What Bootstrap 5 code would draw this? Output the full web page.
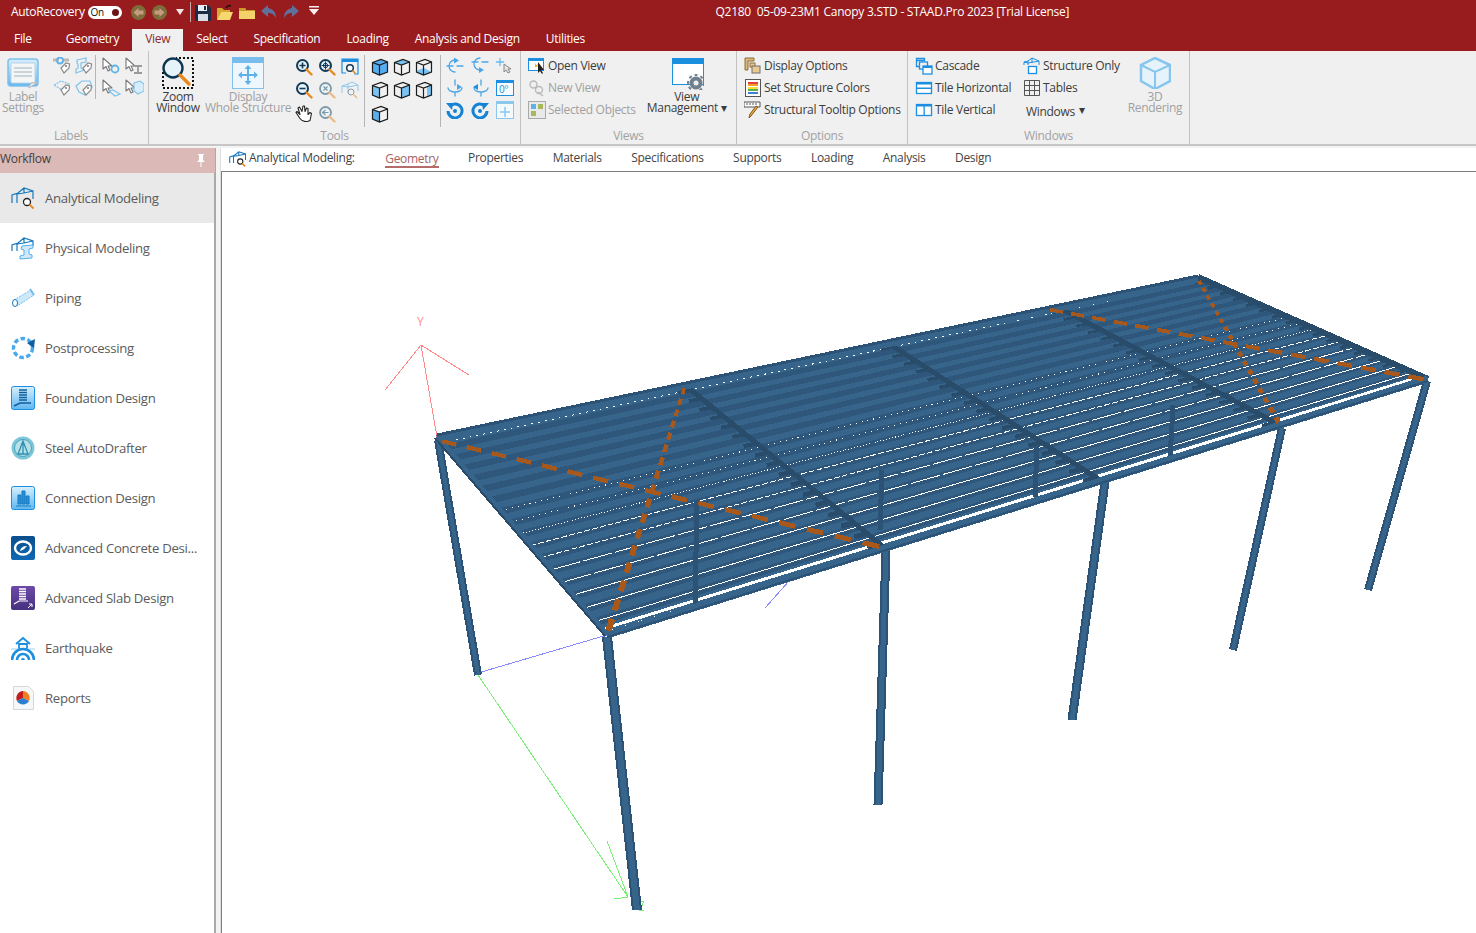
<!DOCTYPE html>
<html lang="en">
<head>
<meta charset="utf-8">
<title>STAAD.Pro 2023</title>
<link href="https://cdn.jsdelivr.net/npm/bootstrap@5.3.0/dist/css/bootstrap.min.css" rel="stylesheet">
<style>
html,body{height:100%;overflow:hidden}
body{font-family:"Open Sans","Noto Sans","Liberation Sans",sans-serif;font-size:12px;background:#f3f3f3;color:#444;letter-spacing:-.3px}
svg{display:block;flex:none}
.defs{width:0;height:0}
.titlebar{height:26px;background:#981c1e;color:#fff;padding:0 0 2px 11px;font-size:12px}
.toggle{width:34px;height:13px;background:#fff;border-radius:7px;margin-left:3px;color:#111;font-size:10px;line-height:13px;padding-left:3px;position:relative}
.toggle::after{content:"";position:absolute;right:3px;top:3px;width:7px;height:7px;border-radius:50%;background:#6a1416}
.tb-sep{width:1px;height:20px;background:#cfa9a9;margin:0 4px 0 6px}
.tb-ic{margin-left:6px}
.tb-last{margin-left:10px}
.wtitle{padding-right:10px;white-space:pre;letter-spacing:-.26px}
.tabs{height:25px;background:#981c1e;margin:0;padding-top:3px;border:0;flex-wrap:nowrap}
.tabs .nav-link{height:22px;padding:2px 13px 0;color:#fff;border:0;border-radius:0;background:none;font-size:12px;line-height:16px;margin:0}
.tabs .nav-link.active{background:#f0f0f0;color:#8c2a2a}
.tabs .file{padding-left:14px;padding-right:21px}
.ribbon{height:95px;background:#f0f0f0;border-bottom:2px solid #c6c6c6;flex:none}
.rgroup{height:93px;border-right:1px solid #c2c2c2;flex:none}
.w1{width:149px}.w2{width:372px}.w3{width:216px}.w4{width:171px}.w5{width:282px}
.rbody{height:77px;padding-top:4px}
.rtitle{height:16px;line-height:16px;text-align:center;color:#a2a2a2}
.w1 .rtitle{padding-right:6px}
.lbtn{line-height:11px;text-align:center;white-space:nowrap;padding-top:2px}
.lbtn svg{margin-bottom:2px}
.muted{color:#a0a0a0}
.dk{color:#3c3c3c}
.ico-grid{display:grid;align-content:start}
.g22{grid-template-columns:repeat(2,22px);grid-auto-rows:22px}
.g23{grid-template-columns:repeat(2,23px);grid-auto-rows:22px}
.t23{grid-template-columns:repeat(3,23px);grid-auto-rows:23.5px}
.t22{grid-template-columns:repeat(3,22px);grid-auto-rows:23.5px}
.t25{grid-template-columns:repeat(3,25px);grid-auto-rows:22px}
.ico-grid>*{align-self:center;justify-self:center}
.vsep{width:1px;background:#b5b5b5;flex:none}
.vs1{height:44px;margin:0 3px 0 0}
.vs2{height:72px;margin:0 4px 0 3px}
.vs3{height:72px;margin:0 1px 0 5px}
.srow{height:22px;gap:2px;white-space:nowrap}
.g1{padding-left:51px}
.lb-label{width:46px;margin-left:-51px;margin-right:5px}
.lb-zoom{width:58px}
.lb-disp{width:86px;margin-left:-2px;margin-right:1px}
.pl7{padding-left:7px}
.lb-view{width:90px;margin-left:6px;padding-top:3px}
.lb-view svg{margin-bottom:1px}
.lb-view svg.mx-auto{position:relative;left:1px}
.col-a{width:108px;margin-left:7px}
.col-b{width:98px}
.win-drop{padding-left:3px;height:22px;margin-top:2px}
.work{min-height:0;padding-top:2px}
.side{width:216px;background:#fff;border-right:2px solid #a9a9a9;flex:none}
.side-h{height:25px;background:#dbb9b6;color:#3f3f3f;padding:0 8px 4px 0;font-size:12px;margin-right:-1px}
.side-h svg{margin-top:3px;margin-right:1px}
.side .list-group-item{height:50px;border:0;border-radius:0;padding:2px 0 0 11px;gap:10px;color:#5b5b5b;font-size:13.2px;background:#fff;white-space:nowrap}
.side .list-group-item.active{background:#e9e9e9;color:#5b5b5b}
.side .list-group-item svg{margin-top:-2px}
.gutter{width:4px;flex:none}
.main{min-width:0;background:#fff;border-left:1px solid #dedede}
.subnav{height:23px;background:#fff;gap:29.5px;padding:0 0 3px 8px;color:#444;white-space:nowrap}
.subnav .sn-title{gap:2px;margin-right:1px}
.subnav .on{color:#a86262;border-bottom:2px solid #b56c6c;line-height:15px;margin-top:2px}
.canvas{border-top:1px solid #808080;border-left:1px solid #808080;background:#fff;min-height:0;overflow:hidden}
.s{fill:none;stroke-width:1.300;stroke-linecap:round;stroke-linejoin:round}
.yl{font-size:12px;fill:#ff9090;font-family:"Open Sans",sans-serif}
</style>
</head>
<body>
<svg class="defs" aria-hidden="true">
<defs>
<linearGradient id="gb" x1="0" y1="0" x2="0" y2="1"><stop offset="0" stop-color="#d8effd"/><stop offset="1" stop-color="#5fb6f0"/></linearGradient>
<linearGradient id="gp" x1="0" y1="0" x2="0" y2="1"><stop offset="0" stop-color="#6d4aa8"/><stop offset="1" stop-color="#47307f"/></linearGradient>
<linearGradient id="gc" x1="0" y1="0" x2="0" y2="1"><stop offset="0" stop-color="#0a4e8c"/><stop offset="1" stop-color="#0f68b4"/></linearGradient>
<symbol id="tag" viewBox="0 0 18 18"><path d="M8 11l5-5 3.500 1-.5 4-5 5z" fill="#fff" stroke="#8b8b8b" stroke-width="1.200"/><circle cx="13" cy="9" r="1" fill="#777"/></symbol>
<symbol id="cur" viewBox="0 0 18 18"><path d="M2 1v11l3-2.500 2 4.500 2-1-2-4h4z" fill="#fff" stroke="#777" stroke-width="1.100" stroke-linejoin="round"/></symbol>
<symbol id="cube" viewBox="0 0 18 18"><path d="M1.500 4.500 10 1.500l6.500 2.500v10L8.500 17l-7-3zM1.500 4.500 8.500 7l8-3M8.500 7v10" fill="none" stroke="#1c1c1c" stroke-width="1.200"/></symbol>
<symbol id="mag" viewBox="0 0 18 18"><circle cx="7.500" cy="7.500" r="5.500" fill="#e9f3fa" stroke="#123a57" stroke-width="2"/><path d="M11.500 11.500l5 5" stroke="#e88a1e" stroke-width="2.400" stroke-linecap="round"/></symbol>
<symbol id="magg" viewBox="0 0 18 18"><circle cx="7.500" cy="7.500" r="5.500" fill="#eef3f6" stroke="#7d9aa8" stroke-width="1.800"/><path d="M11.500 11.500l5 5" stroke="#edbb8a" stroke-width="2.400" stroke-linecap="round"/></symbol>
</defs>
</svg>

<div class="d-flex flex-column vh-100">
  <!-- title bar -->
  <div class="titlebar d-flex align-items-center flex-none">
    <span>AutoRecovery</span>
    <span class="toggle">On</span>
    <svg class="ms-2" width="17" height="17" viewBox="0 0 17 17"><circle cx="8.500" cy="8.500" r="7.500" fill="#7e6c3a"/><path d="M3.500 8.500 8.500 4v2.500h5v4h-5V13z" fill="#c79a82"/></svg>
    <svg class="ms-1" width="17" height="17" viewBox="0 0 17 17"><circle cx="8.500" cy="8.500" r="7.500" fill="#7e6c3a"/><path d="M13.500 8.500 8.500 4v2.500h-5v4h5V13z" fill="#c79a82"/></svg>
    <svg class="ms-2" width="8" height="6" viewBox="0 0 8 6"><path d="M0 0h8L4 6z" fill="#f4e6e6"/></svg>
    <span class="tb-sep"></span>
    <svg width="16" height="17" viewBox="0 0 16 17"><path d="M0 1h13l3 3v13H0z" fill="#1d2c44"/><path d="M3 1h9v6H3z" fill="#e8edf4"/><path d="M9 2h2v4H9z" fill="#1d2c44"/><path d="M3 10h10v7H3z" fill="#d7dde6"/></svg>
    <svg class="tb-ic" width="16" height="15" viewBox="0 0 16 15"><path d="M0 3h5l2 2h6v2H4L1 14H0z" fill="#d7a92c"/><path d="M4 7h12l-3 8H0z" fill="#f6d770"/><path d="M9 3c1-2 3-3 5-2" fill="none" stroke="#111" stroke-width="1.200"/></svg>
    <svg class="tb-ic" width="16" height="13" viewBox="0 0 16 13"><path d="M0 2h6l1 2h9v9H0z" fill="#f3d26c"/><path d="M0 2h6l1 2h9v1H0z" fill="#c99a28"/></svg>
    <svg class="tb-ic" width="16" height="14" viewBox="0 0 16 14"><path d="M7 0 0 6l7 6V8c3 0 6 1 8 5 0-6-3-9-8-10z" fill="#61709a"/></svg>
    <svg class="tb-ic" width="16" height="14" viewBox="0 0 16 14"><path d="M9 0l7 6-7 6V8c-3 0-6 1-8 5 0-6 3-9 8-10z" fill="#61709a"/></svg>
    <svg class="tb-last mb-1" width="10" height="9" viewBox="0 0 10 9"><path d="M0 0h10v1.500H0zM0 3h10L5 9z" fill="#fbeeee"/></svg>
    <div class="flex-grow-1 text-center wtitle">Q2180  05-09-23M1 Canopy 3.STD - STAAD.Pro 2023 [Trial License]</div>
  </div>

  <!-- ribbon tabs -->
  <ul class="nav nav-tabs tabs flex-none">
    <li class="nav-item"><a class="nav-link file" href="#">File</a></li>
    <li class="nav-item"><a class="nav-link" href="#">Geometry</a></li>
    <li class="nav-item"><a class="nav-link active" href="#">View</a></li>
    <li class="nav-item"><a class="nav-link" href="#">Select</a></li>
    <li class="nav-item"><a class="nav-link" href="#">Specification</a></li>
    <li class="nav-item"><a class="nav-link" href="#">Loading</a></li>
    <li class="nav-item"><a class="nav-link" href="#">Analysis and Design</a></li>
    <li class="nav-item"><a class="nav-link" href="#">Utilities</a></li>
  </ul>

  <!-- ribbon -->
  <div class="ribbon d-flex">
    <!-- Labels -->
    <div class="rgroup w1">
      <div class="rbody d-flex g1">
        <div class="lbtn lb-label muted">
          <svg class="mx-auto" width="32" height="32" viewBox="0 0 32 32"><rect x="1" y="2" width="30" height="27" rx="3" fill="url(#gb)" stroke="#7cc0ec" stroke-width="1.500"/><rect x="4" y="6" width="24" height="20" rx="1" fill="#f4f5f5" stroke="#b9d4e6"/><path d="M7 11h18M7 15h18M7 19h18" stroke="#9fb3c2"/><path d="M22 31c0-4 3-6 9-6z" fill="#e9e9e9" stroke="#b5b5b5"/></svg>
          Label<br>Settings
        </div>
        <div class="ico-grid g22">
          <svg width="18" height="18" viewBox="0 0 18 18"><path d="M0 3h6M10 3h6" stroke="#b9b9b9" stroke-width="3"/><circle cx="7" cy="3.500" r="3" fill="none" stroke="#5fb2e8" stroke-width="1.800"/><use href="#tag"/></svg>
          <svg width="18" height="18" viewBox="0 0 18 18"><path d="M2 3 11 1v4l-5 1v5l3 2-8 3v-4l2-1V7L2 6z" fill="none" stroke="#7fc2ee" stroke-width="1.200"/><use href="#tag"/></svg>
          <svg width="18" height="18" viewBox="0 0 18 18"><path d="M1 6 8 2l8 3-7 6z" fill="none" stroke="#7fc2ee" stroke-width="1.200" stroke-dasharray="2 1"/><use href="#tag"/></svg>
          <svg width="18" height="18" viewBox="0 0 18 18"><path d="M1 7 7 2h8l2 6-7 8-6-3z" fill="none" stroke="#7fc2ee" stroke-width="1.200"/><use href="#tag"/></svg>
        </div>
        <span class="vsep vs1"></span>
        <div class="ico-grid g23">
          <svg width="20" height="18" viewBox="0 0 20 18"><use href="#cur" width="18" height="18"/><circle cx="14" cy="12" r="3.500" fill="none" stroke="#5fb2e8" stroke-width="1.800"/></svg>
          <svg width="20" height="18" viewBox="0 0 20 18"><use href="#cur" width="18" height="18"/><path d="M10 9h8M10 16h8M14 9v7" stroke="#9a9a9a" stroke-width="1.800"/></svg>
          <svg width="20" height="18" viewBox="0 0 20 18"><use href="#cur" width="18" height="18"/><path d="M8 12l4-1 7 4-5 2z" fill="none" stroke="#7fc2ee" stroke-width="1.200"/></svg>
          <svg width="20" height="18" viewBox="0 0 20 18"><use href="#cur" width="18" height="18"/><path d="M10 4l6-2 4 3v7l-6 3-4-3z" fill="#d8edfb" stroke="#7fc2ee" stroke-width="1.100"/></svg>
        </div>
      </div>
      <div class="rtitle">Labels</div>
    </div>

    <!-- Tools -->
    <div class="rgroup w2">
      <div class="rbody d-flex">
        <div class="lbtn lb-zoom dk">
          <svg class="mx-auto" width="34" height="32" viewBox="0 0 34 32"><rect x="2" y="1" width="30" height="30" fill="none" stroke="#111" stroke-width="2" stroke-dasharray="2 2"/><path d="M0 0h15v15H0z" fill="#f0f0f0"/><circle cx="12" cy="11" r="9.500" fill="#e6f3fb" stroke="#0e3550" stroke-width="2.400"/><path d="M19 18l9 9" stroke="#e8881c" stroke-width="3.400" stroke-linecap="round"/></svg>
          Zoom<br>Window
        </div>
        <div class="lbtn lb-disp muted">
          <svg class="mx-auto" width="32" height="32" viewBox="0 0 32 32"><rect x=".5" y=".5" width="31" height="31" fill="#eef7fd" stroke="#82c3ee"/><rect x="0" y="0" width="32" height="6" fill="#79bdec"/><path d="M16 9v18M7 18h18" stroke="#5fb2e8" stroke-width="2"/><path d="M16 8l3.500 4h-7zM16 28l3.500-4h-7zM6 18l4-3.500v7zM26 18l-4-3.500v7z" fill="#5fb2e8"/></svg>
          Display<br>Whole Structure
        </div>
        <div class="ico-grid t23">
          <svg width="18" height="18" viewBox="0 0 18 18"><use href="#mag"/><path d="M4.500 7.500h6M7.500 4.500v6" stroke="#123a57" stroke-width="1.600"/></svg>
          <svg width="18" height="18" viewBox="0 0 18 18"><use href="#mag"/><path d="M3.500 7.500h8M7.500 3.500v8" stroke="#123a57" stroke-width="1"/><circle cx="7.500" cy="7.500" r="2.200" fill="none" stroke="#123a57"/></svg>
          <svg width="18" height="18" viewBox="0 0 18 18"><path d="M1 5V1h16v15h-4M1 5v10h4" fill="none" stroke="#1d8fe0" stroke-width="1.200"/><path d="M1 1h16v3H1z" fill="#1d8fe0"/><circle cx="9" cy="10" r="3.300" fill="#fff" stroke="#123a57" stroke-width="1.500"/><path d="M11.500 12.500l3 3" stroke="#e8881c" stroke-width="1.600"/></svg>
          <svg width="18" height="18" viewBox="0 0 18 18"><use href="#mag"/><path d="M4.500 7.500h6" stroke="#123a57" stroke-width="1.600"/></svg>
          <svg width="18" height="18" viewBox="0 0 18 18"><use href="#magg"/><path d="M5.500 5.500l4 4M9.500 5.500l-4 4" stroke="#7d9aa8" stroke-width="1.200"/></svg>
          <svg width="18" height="18" viewBox="0 0 18 18"><path d="M1 12V5l6-2 4-2 6 3v6M7 3v9M1 5l6 1 10-2" fill="none" stroke="#8fc8ee"/><circle cx="10" cy="11" r="3" fill="#f0f0f0" stroke="#8b9da8"/><path d="M12 13l4 4" stroke="#edbb8a" stroke-width="1.600"/></svg>
          <svg width="18" height="19" viewBox="0 0 18 18"><path d="M5 10 2 7 1 8l4 6c2 3 7 4 10 2l1.500-7-1.500-1-2 2V4l-1.500-.5L10 7 9.500 1.500H8L7 7 4.500 2.500 3 3.500z" fill="#fff" stroke="#222" stroke-width="1.100" stroke-linejoin="round"/></svg>
          <svg width="18" height="18" viewBox="0 0 18 18"><use href="#magg"/><path d="M4.500 7.500h6M7.500 5l-3 2.500 3 2.500" fill="none" stroke="#7d9aa8" stroke-width="1.200"/></svg>
        </div>
        <span class="vsep vs2"></span>
        <div class="ico-grid t22">
          <svg width="18" height="18" viewBox="0 0 18 18"><path d="M1.500 4.500 10 1.500l6.500 2.500v10L8.500 17l-7-3z" fill="#55aef0"/><use href="#cube"/></svg>
          <svg width="18" height="18" viewBox="0 0 18 18"><path d="M1.500 4.500 10 1.500l6.500 2.500-8 3z" fill="#79c3f4"/><use href="#cube"/></svg>
          <svg width="18" height="18" viewBox="0 0 18 18"><path d="M3 12l6-2 7.500 4-8 3-7-3z" fill="#79c3f4"/><use href="#cube"/></svg>
          <svg width="18" height="18" viewBox="0 0 18 18"><path d="M1.500 4.500 8.500 7v10l-7-3z" fill="#79c3f4"/><use href="#cube"/></svg>
          <svg width="18" height="18" viewBox="0 0 18 18"><path d="M8.500 7l8-3v10l-8 3z" fill="#79c3f4"/><use href="#cube"/></svg>
          <svg width="18" height="18" viewBox="0 0 18 18"><path d="M12 5.500l4.500-1.500v10l-4.500 1.700z" fill="#79c3f4"/><use href="#cube"/></svg>
          <svg width="18" height="18" viewBox="0 0 18 18"><path d="M1.500 4.500 8.500 7v10l-7-3z" fill="#5ab0ee"/><use href="#cube"/></svg>
        </div>
        <span class="vsep vs3"></span>
        <div class="ico-grid t25">
          <svg width="18" height="18" viewBox="0 0 18 18"><path class="s" d="M1 9h6M11 9h6M9 3a6 6 0 0 0 0 12" stroke="#4aa6e8"/><path d="M8 .5l5 3-5 3z" fill="#4aa6e8"/></svg>
          <svg width="18" height="18" viewBox="0 0 18 18"><path class="s" d="M1 5h6M11 5h6M9 1a6 6 0 0 0 0 12" stroke="#4aa6e8"/><path d="M8 10l5 3-5 3z" fill="#4aa6e8"/></svg>
          <svg width="20" height="18" viewBox="0 0 20 18"><path d="M5 1v8M1 5h8" stroke="#6ab8ee" stroke-width="1.300"/><path d="M9 7v8l2-2 2 3 2-1-2-3h3z" fill="#e3e3e3" stroke="#888"/></svg>
          <svg width="18" height="18" viewBox="0 0 18 18"><path class="s" d="M9 1v5M9 13v4M2 9a7 4 0 0 0 14 0" stroke="#4aa6e8"/><path d="M11 5l5 3-5 3z" fill="#4aa6e8"/></svg>
          <svg width="18" height="18" viewBox="0 0 18 18"><path class="s" d="M10 1v5M10 13v4M3 9a7 4 0 0 0 14 0" stroke="#4aa6e8"/><path d="M7 5 2 8l5 3z" fill="#1d8fe0"/></svg>
          <svg width="18" height="16" viewBox="0 0 18 16"><rect x=".5" y=".5" width="17" height="15" fill="#f8fbfd" stroke="#1d8fe0"/><path d="M0 0h18v3H0z" fill="#1d8fe0"/><text x="3" y="13" font-size="10" fill="#1d8fe0">0º</text></svg>
          <svg width="18" height="18" viewBox="0 0 18 18"><path d="M4 5a7 7 0 1 1-2 5" fill="none" stroke="#1483d6" stroke-width="3"/><path d="M0 2l7 0-1 7z" fill="#1483d6"/><circle cx="9" cy="10" r="2" fill="#1483d6"/></svg>
          <svg width="18" height="18" viewBox="0 0 18 18"><path d="M14 5a7 7 0 1 0 2 5" fill="none" stroke="#1483d6" stroke-width="3"/><path d="M18 2l-7 0 1 7z" fill="#1483d6"/><circle cx="9" cy="10" r="2" fill="#1483d6"/></svg>
          <svg width="18" height="18" viewBox="0 0 18 18"><rect x=".5" y=".5" width="17" height="17" fill="#f3f9fd" stroke="#8cc8ee"/><path d="M0 0h18v3H0z" fill="#8cc8ee"/><path d="M9 6v10M4 11h10" stroke="#8cc8ee" stroke-width="1.500"/></svg>
        </div>
      </div>
      <div class="rtitle">Tools</div>
    </div>

    <!-- Views -->
    <div class="rgroup w3">
      <div class="rbody d-flex">
        <div class="pl7 flex-none">
          <div class="srow d-flex align-items-center dk"><svg width="18" height="18" viewBox="0 0 18 18"><rect x=".5" y="1.500" width="15" height="12" fill="#fff" stroke="#1d8fe0"/><path d="M0 1h16v3H0z" fill="#1d8fe0"/><path d="M10 5v11l2-2 2 3 1-1-2-3h3z" fill="#222"/><path d="M7 6l1 2 2-1-1 2 1 1H7z" fill="#f2b02c"/></svg>Open View</div>
          <div class="srow d-flex align-items-center muted"><svg width="18" height="18" viewBox="0 0 18 18"><circle cx="5.500" cy="5.500" r="3.500" fill="none" stroke="#b9b9b9" stroke-width="1.400"/><circle cx="11" cy="11" r="3.500" fill="none" stroke="#b9b9b9" stroke-width="1.400"/><path d="M10 13l5 4" stroke="#b9b9b9" stroke-width="1.400"/></svg>New View</div>
          <div class="srow d-flex align-items-center muted"><svg width="18" height="18" viewBox="0 0 18 18"><rect x=".5" y=".5" width="17" height="17" fill="#e9e9e9" stroke="#a9a9a9"/><path d="M3 3h5v5H3z" fill="#5fb2e8"/><path d="M10 3h5v5h-5z" fill="#a6b85a"/><path d="M3 10h5v5H3z" fill="#a6b85a"/></svg>Selected Objects</div>
        </div>
        <div class="lbtn lb-view dk">
          <svg class="mx-auto" width="32" height="32" viewBox="0 0 32 32"><rect x=".5" y=".5" width="31" height="26" fill="#fff" stroke="#1d8fe0"/><path d="M0 0h32v6H0z" fill="#1d8fe0"/><circle cx="24" cy="25" r="6.500" fill="#6f7f8c"/><circle cx="24" cy="25" r="8" fill="none" stroke="#6f7f8c" stroke-width="2" stroke-dasharray="3 3"/><circle cx="24" cy="25" r="2.500" fill="#f0f0f0"/></svg>
          View<br>Management <span>&#9662;</span>
        </div>
      </div>
      <div class="rtitle">Views</div>
    </div>

    <!-- Options -->
    <div class="rgroup w4">
      <div class="rbody pl7">
        <div class="srow d-flex align-items-center dk"><svg width="18" height="18" viewBox="0 0 18 18"><path d="M1 1h9v3H4v9H1z" fill="#d9b77a" stroke="#8c6f3a"/><rect x="6" y="6" width="5" height="4" fill="#e8c98f" stroke="#8c6f3a"/><rect x="8" y="9" width="8" height="7" fill="#e8c98f" stroke="#6e6e6e"/></svg>Display Options</div>
        <div class="srow d-flex align-items-center dk"><svg width="18" height="18" viewBox="0 0 18 18"><rect x="1.500" y=".5" width="15" height="17" fill="#fff" stroke="#555"/><path d="M4 3h10v2H4z" fill="#e2403a"/><path d="M4 5h10v2H4z" fill="#f2a02c"/><path d="M4 8h10v2H4z" fill="#f6dd3a"/><path d="M4 10h10v2H4z" fill="#5ab04a"/><path d="M4 13h10v2H4z" fill="#3f7fd0"/></svg>Set Structure Colors</div>
        <div class="srow d-flex align-items-center dk"><svg width="18" height="18" viewBox="0 0 18 18"><path d="M0 1h16v5H0z" fill="#fff" stroke="#555"/><path d="M2 3h12" stroke="#555" stroke-dasharray="2 1"/><path d="M14 6 7 15l-2 2 1-4 6-8z" fill="#efa73a" stroke="#7d5a1c"/></svg>Structural Tooltip Options</div>
      </div>
      <div class="rtitle">Options</div>
    </div>

    <!-- Windows -->
    <div class="rgroup w5">
      <div class="rbody d-flex">
        <div class="col-a flex-none">
          <div class="srow d-flex align-items-center dk"><svg width="18" height="18" viewBox="0 0 18 18"><path d="M1.500 1.500h8v2h-8zM1.500 3.500v6h3" fill="none" stroke="#1d8fe0" stroke-width="1.300"/><rect x="4.500" y="5" width="8" height="7" fill="none" stroke="#1d8fe0" stroke-width="1.300"/><rect x="8" y="9" width="9" height="8" fill="#fff" stroke="#1d8fe0" stroke-width="1.300"/><path d="M8 9h9v2H8z" fill="#1d8fe0"/></svg>Cascade</div>
          <div class="srow d-flex align-items-center dk"><svg width="18" height="18" viewBox="0 0 18 18"><rect x="1.500" y="3.500" width="15" height="11" fill="#fff" stroke="#1d8fe0" stroke-width="1.300"/><path d="M1 3h16v2.500H1zM1 8.500h16v1.500H1z" fill="#1d8fe0"/></svg>Tile Horizontal</div>
          <div class="srow d-flex align-items-center dk"><svg width="18" height="18" viewBox="0 0 18 18"><rect x="1.500" y="3.500" width="15" height="11" fill="#fff" stroke="#1d8fe0" stroke-width="1.300"/><path d="M1 3h16v2.500H1zM8.500 3h1.300v12H8.500z" fill="#1d8fe0"/></svg>Tile Vertical</div>
        </div>
        <div class="col-b flex-none">
          <div class="srow d-flex align-items-center dk"><svg width="18" height="18" viewBox="0 0 18 18"><path d="M1 8V5l4-1 4-3 7 3v4M5 4v4M1 5l4 1 11-2M9 1v5" fill="none" stroke="#1d8fe0"/><rect x="5.500" y="9.500" width="8" height="7" fill="#fff" stroke="#1d8fe0" stroke-width="1.300"/></svg>Structure Only</div>
          <div class="srow d-flex align-items-center dk"><svg width="18" height="18" viewBox="0 0 18 18"><path d="M1.500 1.500h15v15h-15zM6.500 1.500v15M11.500 1.500v15M1.500 6.500h15M1.500 11.500h15" fill="none" stroke="#555" stroke-width="1"/></svg>Tables</div>
          <div class="win-drop d-flex align-items-center gap-1 dk">Windows <span class="mb-1">&#9662;</span></div>
        </div>
        <div class="lbtn muted flex-grow-1">
          <svg class="mx-auto" width="32" height="32" viewBox="0 0 32 32"><path d="M16 1 31 8v16L16 32 2 24V8z" fill="#e7f3fb" stroke="#86c5ee" stroke-width="2.500"/><path d="M2 8l14 7 15-7M16 15v16" fill="none" stroke="#86c5ee" stroke-width="2"/></svg>
          3D<br>Rendering
        </div>
      </div>
      <div class="rtitle">Windows</div>
    </div>
  </div>

  <!-- work area -->
  <div class="work d-flex flex-grow-1">
    <aside class="side d-flex flex-column">
      <div class="side-h d-flex align-items-center justify-content-between flex-none">
        <span>Workflow</span>
        <svg width="10" height="13" viewBox="0 0 10 13"><path d="M2 0h6v1H7v5l2 2H1l2-2V1H2zM4.500 8h1v5h-1z" fill="#fff"/></svg>
      </div>
      <div class="list-group list-group-flush">
        <a href="#" class="list-group-item active d-flex align-items-center">
          <svg width="24" height="24" viewBox="0 0 24 24"><path d="M1 17V9l6-2 6-5 9 3v8M6 7v10M6 8l7-1 9-2M13 2v5" fill="none" stroke="#1578bd" stroke-width="1.200"/><circle cx="16" cy="16" r="3.500" fill="#fff" stroke="#222" stroke-width="1.300"/><path d="M18.500 18.500l4 4" stroke="#e8881c" stroke-width="1.800"/></svg>Analytical Modeling</a>
        <a href="#" class="list-group-item d-flex align-items-center">
          <svg width="24" height="24" viewBox="0 0 24 24"><path d="M1 15V9l6-2 6-5 9 3v5M6 7v8M6 8l7-1 9-2M13 2v5" fill="none" stroke="#1578bd" stroke-width="1.200"/><path d="M11 10l11-1v3l-4 1v5l3 1v3l-12 1v-3l4-1v-5l-3-1z" fill="#cfe9fb" stroke="#55aee8"/></svg>Physical Modeling</a>
        <a href="#" class="list-group-item d-flex align-items-center">
          <svg width="24" height="24" viewBox="0 0 24 24"><path d="M3 14 20 4l3 5L6 20z" fill="#cfe9fb" stroke="#6bbdf0" stroke-dasharray="2 1"/><ellipse cx="4" cy="17" rx="2.500" ry="3.500" fill="#fff" stroke="#1578bd"/><path d="M19 3l4 6" stroke="#6bbdf0" stroke-width="2"/></svg>Piping</a>
        <a href="#" class="list-group-item d-flex align-items-center">
          <svg width="24" height="24" viewBox="0 0 24 24"><circle cx="12" cy="12" r="9.500" fill="none" stroke="#4aa9ec" stroke-width="3.400" stroke-dasharray="4.500 2.500"/><path d="M16 7 24 3l-1 9-3-2z" fill="#0f5f9e"/></svg>Postprocessing</a>
        <a href="#" class="list-group-item d-flex align-items-center">
          <svg width="24" height="24" viewBox="0 0 24 24"><rect x=".5" y=".5" width="23" height="23" rx="2" fill="url(#gb)" stroke="#1d8fe0"/><path d="M8 4h8M8 6.500h8M8 9h8M8 11.500h8M8 14h8" stroke="#0f5f9e" stroke-width="1.400"/><path d="M3 20l6-3h11" fill="none" stroke="#0f5f9e" stroke-width="1.400"/></svg>Foundation Design</a>
        <a href="#" class="list-group-item d-flex align-items-center">
          <svg width="24" height="24" viewBox="0 0 24 24"><circle cx="12" cy="12" r="11.500" fill="#7fc7d8"/><circle cx="12" cy="12" r="8.500" fill="#b7e1ea" stroke="#4aa4ba"/><path d="M12 5 7 18h10zM12 5v13" fill="none" stroke="#2f8fb0" stroke-width="1.300"/></svg>Steel AutoDrafter</a>
        <a href="#" class="list-group-item d-flex align-items-center">
          <svg width="24" height="24" viewBox="0 0 24 24"><rect x=".5" y=".5" width="23" height="23" rx="2" fill="url(#gb)" stroke="#1d8fe0"/><path d="M7 9h3v9H7zM11 5h3v13h-3zM15 10h3v8h-3zM5 20h15" stroke="#1578bd" fill="#2a8fd8"/></svg>Connection Design</a>
        <a href="#" class="list-group-item d-flex align-items-center">
          <svg width="24" height="24" viewBox="0 0 24 24"><rect width="24" height="24" rx="2" fill="url(#gc)"/><ellipse cx="12" cy="12" rx="8" ry="6.500" fill="none" stroke="#fff" stroke-width="2.400"/><path d="M9 15c1-4 4-5 7-5-2 2-3 4-7 5z" fill="#fff"/></svg>Advanced Concrete Desi...</a>
        <a href="#" class="list-group-item d-flex align-items-center">
          <svg width="24" height="24" viewBox="0 0 24 24"><rect width="24" height="24" rx="2" fill="url(#gp)"/><path d="M8 3h7M8 5.500h7M8 8h7M8 10.500h7M8 13h7" stroke="#fff" stroke-width="1.300"/><path d="M3 18l5-3h9" fill="none" stroke="#fff" stroke-width="1.200"/><path d="M17 22l4-4M18 18h3v3" fill="none" stroke="#fff"/></svg>Advanced Slab Design</a>
        <a href="#" class="list-group-item d-flex align-items-center">
          <svg width="24" height="24" viewBox="0 0 24 24"><path d="M5 8l7-6 7 6M8 8h8v5H8z" fill="none" stroke="#1d8fe0" stroke-width="1.800"/><path d="M0 13h24" stroke="#9ad0f2" stroke-width="1"/><path d="M1 24a11 11 0 0 1 22 0M6 24a6 6 0 0 1 12 0" fill="none" stroke="#1d8fe0" stroke-width="2.600"/><circle cx="12" cy="24" r="2" fill="#1d8fe0"/></svg>Earthquake</a>
        <a href="#" class="list-group-item d-flex align-items-center">
          <svg width="24" height="24" viewBox="0 0 24 24"><path d="M2.500 .5h15l5 5v18h-20z" fill="#f6f7f8" stroke="#d5d8da"/><path d="M12 5a7 7 0 0 1 6 10l-6-3z" fill="#ee7f1f"/><path d="M12 5a7 7 0 0 0-6 10l6-3z" fill="#c01d1d"/><path d="M6 15a7 7 0 0 0 12 0l-6-3z" fill="#2a7fd0"/></svg>Reports</a>
      </div>
    </aside>
    <div class="gutter"></div>
    <main class="main d-flex flex-column flex-grow-1">
      <div class="subnav d-flex align-items-center flex-none">
        <span class="sn-title d-flex align-items-center">
          <svg width="18" height="17" viewBox="0 0 24 22"><path d="M1 17V9l6-2 6-5 9 3v8M6 7v10M6 8l7-1 9-2M13 2v5" fill="none" stroke="#1578bd" stroke-width="1.400"/><circle cx="15" cy="15" r="3.500" fill="#fff" stroke="#222" stroke-width="1.400"/><path d="M17.500 17.500l4 4" stroke="#e8881c" stroke-width="2"/></svg>
          Analytical Modeling:</span>
        <span class="on">Geometry</span>
        <span>Properties</span>
        <span>Materials</span>
        <span>Specifications</span>
        <span>Supports</span>
        <span>Loading</span>
        <span>Analysis</span>
        <span>Design</span>
      </div>
      <div class="canvas flex-grow-1">
        <svg id="model" width="1254" height="761" viewBox="222 172 1254 761" shape-rendering="crispEdges" role="img" aria-label="3D steel canopy model">
          <text class="yl" x="417" y="326">Y</text>
        </svg>
      </div>
    </main>
  </div>
</div>

<script src="https://cdn.jsdelivr.net/npm/bootstrap@5.3.0/dist/js/bootstrap.bundle.min.js"></script>
<script>
(function(){
  var svg=document.getElementById('model'),NS='http://www.w3.org/2000/svg';
  var LIGHT='#37648b',BASE='#2e577b',DARK='#2c5375',FRAME='#294c6b',OR='#a8581b';
  function el(n,a){var e=document.createElementNS(NS,n);for(var k in a)e.setAttribute(k,a[k]);svg.appendChild(e);return e}
  function line(a,b,c,w,d){var o={x1:a[0],y1:a[1],x2:b[0],y2:b[1],stroke:c,'stroke-width':w};if(d)o['stroke-dasharray']=d;return el('line',o)}
  function poly(p,c){el('polygon',{points:p.map(function(q){return q[0].toFixed(1)+','+q[1].toFixed(1)}).join(' '),fill:c})}
  function proj(a,b,s,k){var w=(1-s)+k*s;return [(a[0]*(1-s)+b[0]*k*s)/w,(a[1]*(1-s)+b[1]*k*s)/w]}
  function cross(a,b,c,d){
    var x1=b[0]-a[0],y1=b[1]-a[1],x2=d[0]-c[0],y2=d[1]-c[1],t=((c[0]-a[0])*y2-(c[1]-a[1])*x2)/(x1*y2-y1*x2);
    return [a[0]+t*x1,a[1]+t*y1];
  }
  var B=[[437,437],[685,385],[888,343],[1058,307],[1198,277]];
  var F=[[607,635],[885,548],[1100,480],[1280,425],[1428,379]];
  var N=17;
  function L(s){return proj(B[0],F[0],s,.85)}
  function R(s){return proj(B[4],F[4],s,.92)}

  /* axes */
  var red='#ff8a8a',blue='#8a8aff',green='#78f078';
  line([421,345],[437,437],red,1);line([421,345],[385,390],red,1);line([421,345],[469,375],red,1);
  line([607,635],[478,673],blue,1);line([765,608],[830,535],blue,1);
  line([478,675],[628,897],green,1);line([607,841],[628,897],green,1);line([614,899],[628,897],green,1);
  el('path',{d:'M640 901h4l-4 9h4',fill:'none',stroke:green,'stroke-width':1});

  /* columns */
  function col(a,b,w){line(a,b,DARK,w);line(a,b,LIGHT,Math.max(2,w-4))}
  col([438,440],[478,675],8);
  col([607,637],[637,910],10);
  col([886,550],[878,805],9);
  col([1105,482],[1072,720],9);
  col([1282,428],[1233,650],8);
  col([1427,381],[1368,590],8);

  /* roof deck */
  poly([L(0),R(0),R(.96),L(.96)],BASE);
  for(var i=0;i<N;i++){
    var a=(i+.3)/N,b=(i+.78)/N;
    poly([L(a),R(a),R(b),L(b)],LIGHT);
  }
  /* slits between purlins */
  for(var j=1;j<=N;j++){
    var s=j/N,d=null;
    if(j==N) s=.975;
    if(j<7) continue;
    if(j<9) d='1 5'; else if(j<10) d='1 2'; else if(j<12) d='6 2'; else if(j<14) d='30 3';
    line(L(s),R(s),'#ffffff',j==N?3:1,d);
  }
  line(L(.035),R(.035),'#ffffff',1,'2 5');
  /* mid-span hangers show through the slits */
  [[[697,500],[695,605]],[[882,470],[880,530]],[[1037,445],[1035,497]],[[1173,405],[1170,460]]].forEach(function(p){line(p[0],p[1],DARK,5)});

  /* frames: stepped where each purlin lands on them */
  for(var f=1;f<4;f++){
    line(B[f],F[f],FRAME,5);
    for(var n=0;n<N;n++){
      var t=(n+.6)/N,la=L(t),ra=R(t),p=cross(la,ra,B[f],F[f]);
      var dx=ra[0]-la[0],dy=ra[1]-la[1],len=Math.hypot(dx,dy);
      var sp=Math.abs(L((n+1)/N)[1]-L(n/N)[1])*(1-f*.13);
      line([p[0]-dx/len*13,p[1]-dy/len*13],[p[0]+2,p[1]],FRAME,Math.max(2.5,sp*.42));
    }
  }
  /* end frames */
  line(B[0],F[0],LIGHT,6);line([B[0][0]-2,B[0][1]+1],[F[0][0]-2,F[0][1]+1],FRAME,2);
  line(B[4],F[4],FRAME,6);
  for(var e=0;e<N;e++){
    var t2=(e+.6)/N,q=R(t2),l2=L(t2),ex=q[0]-l2[0],ey=q[1]-l2[1],el2=Math.hypot(ex,ey);
    line([q[0]-ex/el2*11,q[1]-ey/el2*11],q,FRAME,3);
  }
  /* eaves */
  line([437,438],[1198,279],LIGHT,7);line([437,435],[1198,276],DARK,3);
  line(F[0],F[4],LIGHT,7);line([607,637],[1428,381],DARK,2);

  /* orange diagonals */
  function dashes(a,b,k,frac,w0,w1){
    for(var i=0;i<N;i++){
      var t=(i+.5)/N,h=frac/N/2,p=proj(a,b,t-h,k),q=proj(a,b,t+h,k);
      line(p,q,OR,w0+(w1-w0)*t);
    }
  }
  dashes([437,440],[885,548],.93,.58,4,5);
  dashes([685,386],[607,635],.7,.58,3.500,6.500);
  dashes([1046,309],[1428,380],.93,.62,3.500,4.500);
  dashes([1198,279],[1280,425],.84,.5,3.500,5);
})();
</script>
</body>
</html>
